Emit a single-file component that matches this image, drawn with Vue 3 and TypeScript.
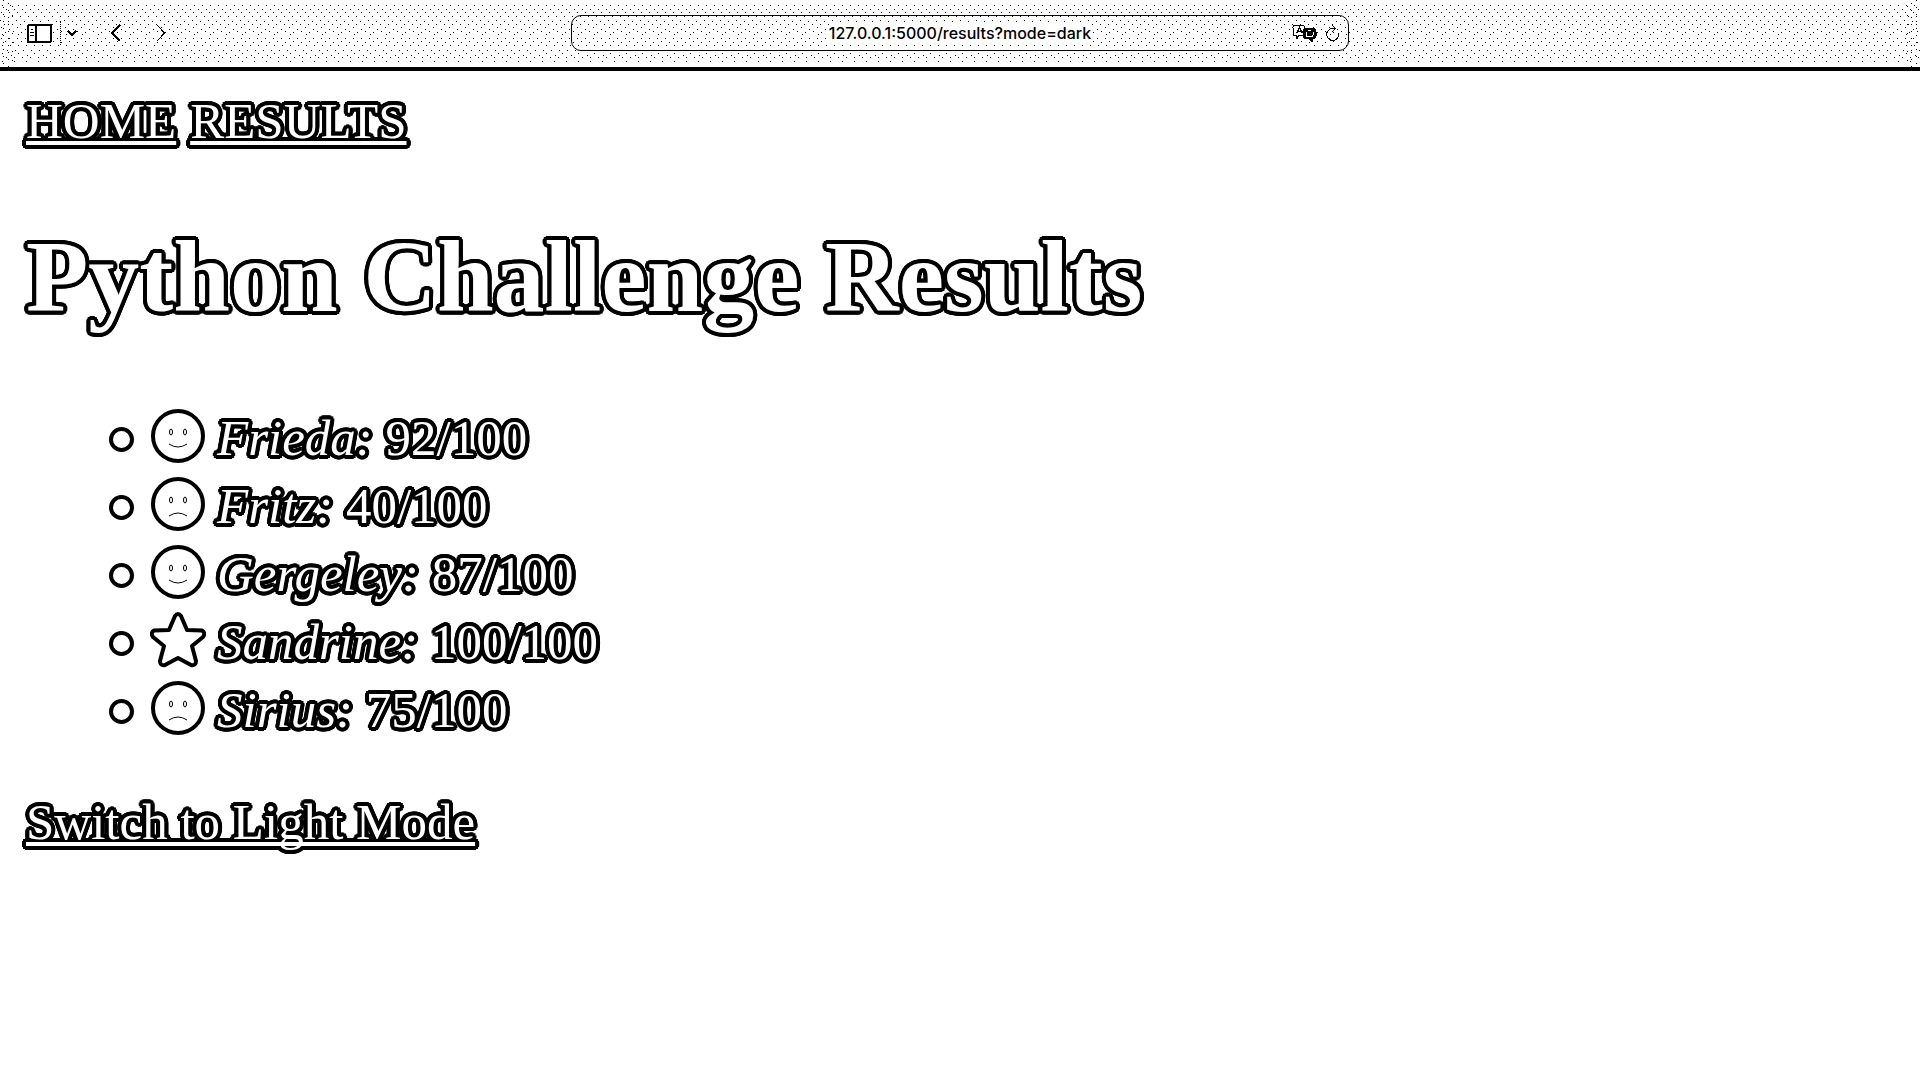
<script setup lang="ts">
import { ref } from 'vue'

type Mood = 'happy' | 'sad' | 'star'

interface Result {
  name: string
  score: string
  mood: Mood
}

const address = ref('127.0.0.1:5000/results?mode=dark')

const results: Result[] = [
  { name: 'Frieda', score: '92/100', mood: 'happy' },
  { name: 'Fritz', score: '40/100', mood: 'sad' },
  { name: 'Gergeley', score: '87/100', mood: 'happy' },
  { name: 'Sandrine', score: '100/100', mood: 'star' },
  { name: 'Sirius', score: '75/100', mood: 'sad' },
]
</script>

<template>
  <header class="toolbar">
    <div class="tools">
      <button class="tool" type="button" aria-label="Sidebar">
        <svg width="25" height="19" viewBox="0 0 25 19" fill="none" stroke="#000">
          <rect x="1" y="1" width="23" height="17" rx="1" fill="#fff" stroke-width="2" />
          <path d="M9 1v17" stroke-width="2" />
          <path d="M4 5.500h2M3 8.500h4M3 11.500h4" stroke-width="1" />
        </svg>
      </button>
      <span class="divider"></span>
      <button class="tool menu" type="button" aria-label="Tab groups">
        <svg width="10" height="7" viewBox="0 0 10 7" fill="none" stroke="#000" stroke-width="2">
          <path d="M1 1l4 4 4-4" />
        </svg>
      </button>
      <button class="tool back" type="button" aria-label="Back">
        <svg width="11" height="18" viewBox="0 0 11 18" fill="none" stroke="#000" stroke-width="2">
          <path d="M10 1L2 9l8 8" />
        </svg>
      </button>
      <button class="tool forward" type="button" aria-label="Forward">
        <svg width="11" height="18" viewBox="0 0 11 18" fill="none" stroke="#000" stroke-width="1">
          <path d="M1.500 .5L9.500 9l-8 8.500" />
        </svg>
      </button>
    </div>

    <div class="field">
      <input v-model="address" class="address" type="text" aria-label="Address" spellcheck="false" />
      <div class="actions">
        <button class="tool" type="button" aria-label="Translate">
          <svg width="26" height="18" viewBox="0 0 26 18" fill="none" stroke="#000">
            <path d="M3 1.500h7q3 0 3 2v6q0 2-2 2H7l-3 3v-3H3q-2 0-2-2v-6q0-2 2-2z" fill="#fff" />
            <path d="M4.500 9.500l3-6 3 6M5.500 7.500h4" />
            <path d="M15 4.500h5q4 0 4 3v4q0 3-4 3v3l-3-3h-2q-4 0-4-3v-4q0-3 4-3z" fill="#000" />
            <path d="M14 7.500v3q0 2 2 2h3q2 0 2-2v-3M16 6.500h3" stroke="#fff" />
          </svg>
        </button>
        <button class="tool" type="button" aria-label="Reload">
          <svg width="14" height="18" viewBox="0 0 14 18" fill="none" stroke="#000">
            <path d="M12.500 9A6 6 0 1 1 6.500 4.500h3M6 1l3.500 3.500L6 8" />
          </svg>
        </button>
      </div>
    </div>
    <div></div>
  </header>

  <main class="page">
    <nav class="nav">
      <a href="#home">HOME</a>
      <a href="#results">RESULTS</a>
    </nav>

    <h1>Python Challenge Results</h1>

    <ul class="results">
      <li v-for="result in results" :key="result.name">
        <span class="bullet"></span>
        <svg class="icon" width="56" height="56" viewBox="0 0 56 56" fill="none" stroke="#000">
          <path
            v-if="result.mood === 'star'"
            d="M25 4Q28 0 31 4L37 18L52 18.500Q56 21 53 25L42 34L46 49Q46 54 41 53L28 46L15 53Q10 54 10 49L14 34L3 25Q0 21 4 18.500L19 18Z"
            stroke-width="4"
            stroke-linejoin="round"
          />
          <template v-else>
            <circle cx="28" cy="28" r="25" stroke-width="4" />
            <ellipse cx="21" cy="24" rx="1.500" ry="3" />
            <ellipse cx="35" cy="24" rx="1.500" ry="3" />
            <path v-if="result.mood === 'happy'" d="M19 36q9 6 18 0" />
            <path v-else d="M19 40q9-6 18 0" />
          </template>
        </svg>
        <span><em>{{ result.name }}:</em> {{ result.score }}</span>
      </li>
    </ul>

    <a href="#light">Switch to Light Mode</a>
  </main>
</template>

<style>
body {
  margin: 0;
  background: #fff;
}
</style>

<style scoped>
.toolbar {
  --dot: conic-gradient(at 1px 1px, transparent 75%, #000 0);
  display: grid;
  grid-template-columns: 1fr 778px 1fr;
  align-items: center;
  box-sizing: border-box;
  height: 71px;
  padding-bottom: 1px;
  border-bottom: 4px solid #000;
  /* stippled shading: one layer per row of dots, denser at both ends */
  background:
    var(--dot) 2px 5px / 8px 1px repeat-x,
    var(--dot) 6px 9px / 8px 1px repeat-x,
    var(--dot) 1px 12px / 8px 1px repeat-x,
    var(--dot) 4px 16px / 8px 1px repeat-x,
    var(--dot) 0 20px / 16px 1px repeat-x,
    var(--dot) 8px 21px / 16px 1px repeat-x,
    var(--dot) 4px 24px / 8px 1px repeat-x,
    var(--dot) 1px 27px / 16px 1px repeat-x,
    var(--dot) 9px 29px / 16px 1px repeat-x,
    var(--dot) 5px 32px / 16px 1px repeat-x,
    var(--dot) 13px 31px / 16px 1px repeat-x,
    var(--dot) 2px 34px / 16px 1px repeat-x,
    var(--dot) 9px 38px / 8px 1px repeat-x,
    var(--dot) 5px 41px / 16px 1px repeat-x,
    var(--dot) 13px 42px / 16px 1px repeat-x,
    var(--dot) 2px 45px / 8px 1px repeat-x,
    var(--dot) 7px 50px / 8px 1px repeat-x,
    var(--dot) 2px 53px / 16px 1px repeat-x,
    var(--dot) 11px 55px / 16px 1px repeat-x,
    var(--dot) 6px 57px / 8px 1px repeat-x,
    var(--dot) 2px 61px / 12px 1px repeat-x,
    var(--dot) 3px 7px / 1px 7px repeat-y,
    var(--dot) 8px 3px / 1px 7px repeat-y,
    var(--dot) 12px 6px / 1px 9px repeat-y,
    var(--dot) right 3px top 7px / 1px 7px repeat-y,
    var(--dot) right 8px top 3px / 1px 7px repeat-y,
    var(--dot) right 12px top 6px / 1px 9px repeat-y,
    #fff;
}

.tools,
.actions {
  display: flex;
  align-items: center;
}

.tools {
  padding-left: 27px;
}

.tool {
  display: flex;
  padding: 0;
  border: 0;
  background: none;
}

.tool svg {
  shape-rendering: crispEdges;
}

.divider {
  height: 24px;
  margin: 0 6px 0 8px;
  border-left: 1px dotted #000;
}

.back {
  margin-left: 33px;
}

.forward {
  margin-left: 34px;
}

.field {
  display: grid;
  grid-template-columns: 1fr auto 1fr;
  align-items: center;
  box-sizing: border-box;
  height: 36px;
  border: 1px solid #000;
  border-radius: 10px;
}

.address {
  grid-column: 2;
  field-sizing: content;
  padding: 0;
  border: 0;
  outline: 0;
  background: #fff;
  color: #000;
  font: 500 16px/20px Inter, "Liberation Sans", sans-serif;
  text-align: center;
}

.actions {
  justify-content: flex-end;
  gap: 8px;
  padding-right: 8px;
}

.page {
  padding: 21px 26px;
  color: #fff;
  font: 51px/58px "Liberation Serif", "Times New Roman", serif;
  /* round outline, 4px outside the letters, with an inner ring to close thin strokes */
  text-shadow:
    4px 0 #000, 4px 1px #000, 3px 2px #000, 3px 3px #000, 2px 3px #000, 1px 4px #000,
    0 4px #000, -1px 4px #000, -2px 3px #000, -3px 3px #000, -3px 2px #000, -4px 1px #000,
    -4px 0 #000, -4px -1px #000, -3px -2px #000, -3px -3px #000, -2px -3px #000, -1px -4px #000,
    0 -4px #000, 1px -4px #000, 2px -3px #000, 3px -3px #000, 3px -2px #000, 4px -1px #000,
    2px 0 #000, 2px 2px #000, 0 2px #000, -2px 2px #000,
    -2px 0 #000, -2px -2px #000, 0 -2px #000, 2px -2px #000;
}

.page a {
  color: inherit;
  text-decoration: underline 4px;
  text-underline-offset: 3px;
  text-decoration-skip-ink: none;
}

.nav {
  display: flex;
  flex-wrap: wrap;
  gap: 14px;
}

h1 {
  margin: 69px 0;
  font-size: 102px;
  line-height: 116px;
}

.results {
  margin: 0 0 49px;
  padding: 0 0 0 83px;
  list-style: none;
}

.results li {
  display: flex;
  align-items: center;
  height: 68px;
}

.bullet {
  box-sizing: border-box;
  width: 25px;
  height: 25px;
  margin: 2px 16px 0 0;
  border: 4px solid #000;
  border-radius: 50%;
}

.icon {
  margin: 0 11px 4px 0;
}
</style>
